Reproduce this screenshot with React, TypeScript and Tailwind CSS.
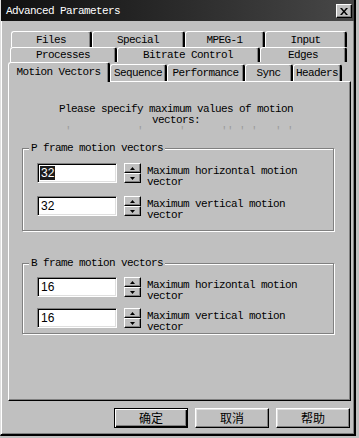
import React from 'react';

const mono = "font-['Liberation_Mono',monospace] text-[11px] tracking-[-0.6px] leading-[11px]";

const Tab = ({ label, w, selected }: { label: string; w: string; selected?: boolean }) => (
  <div
    className={`${w} ${
      selected ? 'h-[20px] -mb-[1px] relative z-10' : 'h-full pt-[1px]'
    } flex items-center justify-center bg-[#c0c0c0] border-l border-t border-white border-r-2 border-r-black rounded-t-[3px] shadow-[inset_-1px_0_0_#808080] text-black ${mono}`}
  >
    {label}
  </div>
);

const Arrow = ({ up }: { up?: boolean }) => (
  <svg width="5" height="3" viewBox="0 0 5 3">
    <path d={up ? 'M0 3h5L2.5 0z' : 'M0 0h5L2.5 3z'} fill="#000" />
  </svg>
);

const Spin = () => (
  <div className="w-[17px] h-[20px] flex flex-col">
    <div className="h-[10px] flex items-center justify-center bg-[#c0c0c0] border-t border-l border-white border-r border-b border-r-black border-b-black shadow-[inset_-1px_-1px_0_#808080]">
      <Arrow up />
    </div>
    <div className="h-[10px] flex items-center justify-center bg-[#c0c0c0] border-t border-l border-white border-r border-b border-r-black border-b-black shadow-[inset_-1px_-1px_0_#808080]">
      <Arrow />
    </div>
  </div>
);

const Row = ({ value, label, selected }: { value: string; label: string; selected?: boolean }) => (
  <div className="h-[20px] flex items-start pl-[14px]">
    <div className="w-[80px] h-[20px] bg-white border-t border-l border-t-[#808080] border-l-[#808080] border-r border-b border-r-white border-b-white shadow-[inset_1px_1px_0_#000,inset_-1px_-1px_0_#dfdfdf] flex items-center pl-[2px]">
      <span
        className={`font-['Liberation_Sans',sans-serif] text-[12px] leading-[14px] px-[1px] ${
          selected ? 'bg-[#1c1c1c] text-white' : 'text-black'
        }`}
      >
        {value}
      </span>
    </div>
    <div className="ml-[7px]">
      <Spin />
    </div>
    <div className={`ml-[6px] mt-[3px] w-[170px] h-[19px] overflow-hidden text-black ${mono}`}>{label}</div>
  </div>
);

const Group = ({
  title,
  box,
  gap,
  pad,
  value,
  selected,
}: {
  title: string;
  box: string;
  gap: string;
  pad: string;
  value: string;
  selected?: boolean;
}) => (
  <div
    className={`relative ml-[13px] w-[312px] ${box} border border-[#808080] shadow-[1px_1px_0_#fff,inset_1px_1px_0_#fff] flex flex-col ${pad} ${gap}`}
  >
    <span className={`absolute -top-[6px] left-[6px] px-[2px] bg-[#c0c0c0] text-black ${mono}`}>{title}</span>
    <Row value={value} label="Maximum horizontal motion vector" selected={selected} />
    <Row value={value} label="Maximum vertical motion vector" />
  </div>
);

const Button = ({ label, primary }: { label: string; primary?: boolean }) => (
  <button
    className={`w-[74px] h-[20px] flex items-center justify-center bg-[#c0c0c0] text-black font-['Noto_Sans_CJK_SC',sans-serif] text-[12px] leading-none ${
      primary
        ? 'border border-black shadow-[inset_1px_1px_0_#fff,inset_-1px_-1px_0_#000,inset_-2px_-2px_0_#808080]'
        : 'border-t border-l border-white border-r border-b border-r-black border-b-black shadow-[inset_-1px_-1px_0_#808080,inset_1px_1px_0_#dfdfdf]'
    }`}
  >
    {label}
  </button>
);

export default function App() {
  return (
    <div className="w-[359px] h-[438px] bg-[#c0c0c0] overflow-hidden">
      <div className="w-[356px] h-[436px] flex flex-col bg-[#c0c0c0] border-l border-l-[#dfdfdf] border-r-2 border-b-2 border-r-black border-b-black shadow-[inset_1px_0_0_#fff,inset_-1px_-1px_0_#808080]">
        {/* title bar */}
        <div className="h-[21px] flex items-center justify-between pl-[5px] pr-[2px] pt-[1px] bg-gradient-to-r from-[#101010] to-[#484848]">
          <span className={`text-white ${mono}`}>Advanced Parameters</span>
          <div className="w-[16px] h-[14px] flex items-center justify-center bg-[#c0c0c0] border-t border-l border-white border-r border-b border-r-black border-b-black shadow-[inset_-1px_-1px_0_#808080]">
            <svg width="8" height="7" viewBox="0 0 8 7">
              <path d="M0 0h2l2 2.5L6 0h2L5 3.5 8 7H6L4 4.5 2 7H0l3-3.5z" fill="#000" />
            </svg>
          </div>
        </div>

        <div className="flex flex-col pl-[7px] pr-[3px]">
          {/* tab rows */}
          <div className="mt-[10px] h-[16px] flex pl-[3px]">
            <Tab label="Files" w="w-[81px]" />
            <Tab label="Special" w="w-[93px]" />
            <Tab label="MPEG-1" w="w-[80px]" />
            <Tab label="Input" w="w-[82px]" />
          </div>
          <div className="h-[15px] flex pl-[2px]">
            <Tab label="Processes" w="w-[107px]" />
            <Tab label="Bitrate Control" w="w-[143px]" />
            <Tab label="Edges" w="w-[87px]" />
          </div>
          <div className="h-[19px] flex items-end">
            <div className="h-[17px] flex items-end">
              <Tab label="Motion Vectors" w="w-[102px]" selected />
              <Tab label="Sequence" w="w-[57px]" />
              <Tab label="Performance" w="w-[78px]" />
              <Tab label="Sync" w="w-[48px]" />
              <Tab label="Headers" w="w-[49px]" />
            </div>
          </div>

          {/* panel */}
          <div className="h-[320px] flex flex-col bg-[#c0c0c0] border-l border-t border-white border-r border-b border-r-black border-b-black shadow-[inset_-1px_-1px_0_#808080]">
            <div className="h-[60px] pt-[22px]">
              <p className={`ml-[47px] w-[240px] text-center text-black ${mono}`}>
                Please specify maximum values of motion vectors:
              </p>
              <p className={`ml-[50px] h-[4px] overflow-hidden whitespace-pre text-[#9c9c9c] ${mono}`}>
                {" '     .     '.     '      '' ' '   ' '"}
              </p>
            </div>
            <div className="mt-[6px]">
              <Group title="P frame motion vectors" box="h-[83px]" pad="pt-[14px]" gap="gap-[13px]" value="32" selected />
            </div>
            <div className="mt-[32px]">
              <Group title="B frame motion vectors" box="h-[71px]" pad="pt-[13px]" gap="gap-[11px]" value="16" />
            </div>
          </div>

          {/* buttons */}
          <div className="mt-[7px] flex justify-end gap-[7px] pr-[1px]">
            <Button label="确定" primary />
            <Button label="取消" />
            <Button label="帮助" />
          </div>
        </div>
      </div>
    </div>
  );
}
